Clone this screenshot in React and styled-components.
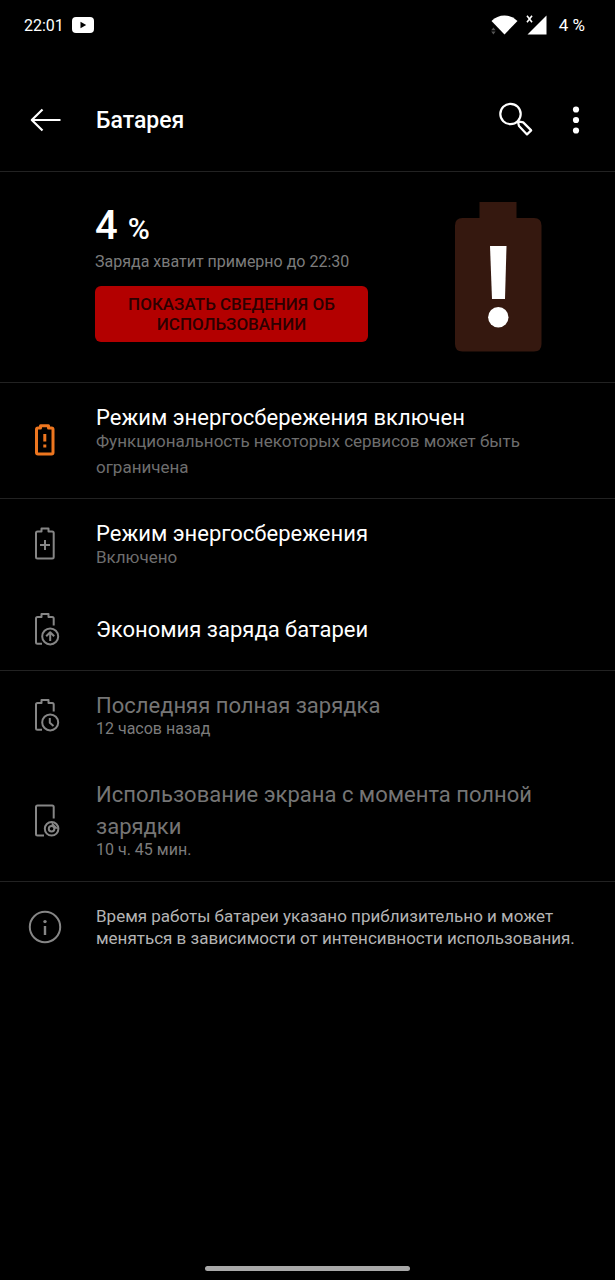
import styled, { createGlobalStyle, css } from "styled-components";

const GlobalStyle = createGlobalStyle`
  *,
  *::before,
  *::after {
    box-sizing: border-box;
  }
  body {
    margin: 0;
    background: #000;
    color: #fff;
    font-family: Roboto, "Noto Sans", sans-serif;
  }
  h1,
  h2,
  p {
    margin: 0;
    font-weight: 400;
  }
  button {
    font-family: inherit;
    border: 0;
    padding: 0;
    cursor: pointer;
  }
  svg {
    display: block;
    flex-shrink: 0;
  }
`;

const Page = styled.div`
  display: flex;
  flex-direction: column;
  min-height: 100vh;
`;

const StatusBar = styled.div`
  display: flex;
  align-items: center;
  justify-content: space-between;
  height: 50px;
  margin-bottom: 19px;
  padding: 0 30px 0 24px;
  font-size: 16px;
`;

const StatusGroup = styled.div`
  display: flex;
  align-items: center;
  gap: 8px;
`;

const Percent = styled.span`
  margin-left: 4px;
  font-size: 17px;
`;

const AppBar = styled.header`
  display: flex;
  align-items: center;
  height: 103px;
  padding: 0 21px 0 27px;
  border-bottom: 1px solid #222;
  h1 {
    flex: 1;
    margin-left: 33px;
    font-size: 23px;
    font-weight: 500;
  }
`;

const IconButton = styled.button`
  display: grid;
  place-items: center;
  width: 36px;
  height: 36px;
  margin-left: ${({ $spaced }) => ($spaced ? "24px" : "0")};
  background: none;
  color: #fff;
`;

const Summary = styled.section`
  display: flex;
  justify-content: space-between;
  gap: 24px;
  padding: 30px 73px 30px 95px;
  border-bottom: 1px solid #222;
`;

const Level = styled.p`
  font-size: 40px;
  font-weight: 500;
  line-height: 48px;
  span {
    font-size: 30px;
    line-height: 1;
  }
`;

const Estimate = styled.p`
  margin-bottom: 12px;
  font-size: 16px;
  line-height: 24px;
  color: #7c7c7c;
`;

const UsageButton = styled.button`
  width: 273px;
  max-width: 100%;
  padding: 8px 24px;
  border-radius: 6px;
  background: #b30000;
  color: #2b0000;
  font-size: 17px;
  font-weight: 500;
  line-height: 20px;
  text-transform: uppercase;
`;

const Section = styled.section`
  border-bottom: 1px solid #222;
`;

const rowLayout = css`
  display: grid;
  grid-template-columns: 36px 1fr;
  column-gap: 33px;
  align-items: center;
`;

const Row = styled.div`
  ${rowLayout}
  min-height: 82px;
  padding: 19px 56px 18px 27px;
  color: ${({ $warning }) => ($warning ? "#ee761f" : "#868686")};
  h2 {
    font-size: 22px;
    line-height: 32px;
    color: ${({ $muted }) => ($muted ? "#757575" : "#fff")};
  }
  p {
    margin-top: -6px;
    font-size: ${({ $muted }) => ($muted ? "16px" : "17px")};
    line-height: 26px;
    color: ${({ $muted }) => ($muted ? "#7c7c7c" : "#6e6e6e")};
  }
`;

const Note = styled.footer`
  ${rowLayout}
  padding: 23px 24px 23px 27px;
  color: #868686;
  p {
    font-size: 17px;
    line-height: 22px;
    color: #b4b4b4;
  }
`;

const HomeBar = styled.div`
  width: 205px;
  height: 5px;
  margin: auto auto 9px;
  border-radius: 3px;
  background: #a8a8a8;
`;

const Icon = ({ children, width = 2 }) => (
  <svg
    width="36"
    height="36"
    viewBox="0 0 36 36"
    fill="none"
    stroke="currentColor"
    strokeWidth={width}
    strokeLinejoin="round"
    aria-hidden="true"
  >
    {children}
  </svg>
);

const BackIcon = () => (
  <Icon width={2.2}>
    <path d="M4.5 18H33.5M15.5 7.5L4.8 18L15.5 28.5" />
  </Icon>
);

const SearchIcon = () => (
  <Icon width={2.2}>
    <circle cx="12.5" cy="12" r="10.2" />
    <path d="M19.8 19.2L21 24L29 32.4L33.2 28.4L25.2 20.4Z" />
  </Icon>
);

const MoreIcon = () => (
  <svg width="36" height="36" viewBox="0 0 36 36" fill="currentColor">
    <circle cx="18" cy="7.5" r="3.1" />
    <circle cx="18" cy="18" r="3.1" />
    <circle cx="18" cy="28.5" r="3.1" />
  </svg>
);

const BatteryAlertIcon = () => (
  <Icon width={3}>
    <path d="M13.5 5V2.8H21.5V5H24.5Q26 5 26 6.5V29.5Q26 31 24.5 31H11Q9.5 31 9.5 29.5V6.5Q9.5 5 11 5Z" />
    <path d="M17.8 11V18.5M17.8 21.5V24.5" />
  </Icon>
);

const BatteryPlusIcon = () => (
  <Icon>
    <path d="M14.5 5.5V2.5H21.5V5.5H25.2Q26.7 5.5 26.7 7V31Q26.7 32.5 25.2 32.5H10.5Q9 32.5 9 31V7Q9 5.5 10.5 5.5Z" />
    <path d="M18 14V24M13 19H23" />
  </Icon>
);

const batteryCutout =
  "M15 31.8H10.5Q9 31.8 9 30.3V6.5Q9 5 10.5 5H14.5V2H21.5V5H25.2Q26.7 5 26.7 6.5V13.5";

const BatteryUpIcon = () => (
  <Icon>
    <path d={batteryCutout} />
    <circle cx="23.2" cy="24.4" r="8" />
    <path d="M23.2 29V20.5M19.2 24.2L23.2 20.2L27.2 24.2" />
  </Icon>
);

const BatteryClockIcon = () => (
  <Icon>
    <path d={batteryCutout} />
    <circle cx="23.2" cy="24.4" r="8" />
    <path d="M22.8 20V24.8L26.5 28" />
  </Icon>
);

const ScreenUsageIcon = () => (
  <Icon>
    <path d="M17 32.5H10.5Q9 32.5 9 31V4Q9 2.5 10.5 2.5H25.2Q26.7 2.5 26.7 4V15.5" />
    <circle cx="24.6" cy="25.8" r="6.8" />
    <circle cx="24.6" cy="25.8" r="2.8" />
    <path d="M24.6 19L31.4 25.8H27.5L24.6 23Z" fill="currentColor" stroke="none" />
  </Icon>
);

const InfoIcon = () => (
  <Icon>
    <circle cx="18" cy="18" r="15.2" />
    <path d="M18 17V26" strokeWidth="2.4" />
    <circle cx="18" cy="12.6" r="1.7" fill="currentColor" stroke="none" />
  </Icon>
);

const YoutubeIcon = () => (
  <svg width="22" height="16" viewBox="0 0 22 16" aria-hidden="true">
    <rect width="22" height="16" rx="4" fill="#fff" />
    <path d="M8.5 4.8V11.2L14.2 8Z" fill="#000" />
  </svg>
);

const WifiIcon = () => (
  <svg width="27" height="20" viewBox="0 0 27 20" aria-hidden="true">
    <path d="M0.5 6Q6 0.5 13.5 0.5T26.5 6L13.5 19.5Z" fill="#fff" />
    <path d="M0.2 15.2L2.4 12.4L4.6 15.2ZM0.2 16.6H4.6L2.4 19.4Z" fill="#555" />
  </svg>
);

const SignalIcon = () => (
  <svg width="21" height="20" viewBox="0 0 21 20" aria-hidden="true">
    <path d="M20.5 0.5V19.5H1.5Z" fill="#fff" />
    <path d="M1 0.8L6 7.2M6 0.8L1 7.2" stroke="#fff" strokeWidth="1.6" />
  </svg>
);

const LowBattery = () => (
  <svg width="88" height="150" viewBox="0 0 88 150" aria-hidden="true">
    <path
      d="M25.5 0H62.5V16H80Q87.5 16 87.5 23.5V142Q87.5 149.5 80 149.5H8.5Q1 149.5 1 142V23.5Q1 16 8.5 16H25.5Z"
      fill="#35180f"
    />
    <path d="M36 44H52.5L51 97H38Z" fill="#fff" />
    <circle cx="44.3" cy="115.3" r="10.2" fill="#fff" />
  </svg>
);

const Item = ({ icon, title, text, warning, muted }) => (
  <Row $warning={warning} $muted={muted}>
    {icon}
    <div>
      <h2>{title}</h2>
      {text && <p>{text}</p>}
    </div>
  </Row>
);

const App = () => {
  return (
    <Page>
      <GlobalStyle />
      <StatusBar>
        <StatusGroup>
          <span>22:01</span>
          <YoutubeIcon />
        </StatusGroup>
        <StatusGroup>
          <WifiIcon />
          <SignalIcon />
          <Percent>4 %</Percent>
        </StatusGroup>
      </StatusBar>
      <AppBar>
        <IconButton type="button" aria-label="Назад">
          <BackIcon />
        </IconButton>
        <h1>Батарея</h1>
        <IconButton type="button" aria-label="Поиск">
          <SearchIcon />
        </IconButton>
        <IconButton type="button" aria-label="Ещё" $spaced>
          <MoreIcon />
        </IconButton>
      </AppBar>
      <main>
        <Summary>
          <div>
            <Level>
              4 <span>%</span>
            </Level>
            <Estimate>Заряда хватит примерно до 22:30</Estimate>
            <UsageButton type="button">
              Показать сведения об использовании
            </UsageButton>
          </div>
          <LowBattery />
        </Summary>
        <Section>
          <Item
            icon={<BatteryAlertIcon />}
            title="Режим энергосбережения включен"
            text="Функциональность некоторых сервисов может быть ограничена"
            warning
          />
        </Section>
        <Section>
          <Item
            icon={<BatteryPlusIcon />}
            title="Режим энергосбережения"
            text="Включено"
          />
          <Item icon={<BatteryUpIcon />} title="Экономия заряда батареи" />
        </Section>
        <Section>
          <Item
            icon={<BatteryClockIcon />}
            title="Последняя полная зарядка"
            text="12 часов назад"
            muted
          />
          <Item
            icon={<ScreenUsageIcon />}
            title="Использование экрана с момента полной зарядки"
            text="10 ч. 45 мин."
            muted
          />
        </Section>
      </main>
      <Note>
        <InfoIcon />
        <p>
          Время работы батареи указано приблизительно и может меняться в
          зависимости от интенсивности использования.
        </p>
      </Note>
      <HomeBar />
    </Page>
  );
};

export default App;
